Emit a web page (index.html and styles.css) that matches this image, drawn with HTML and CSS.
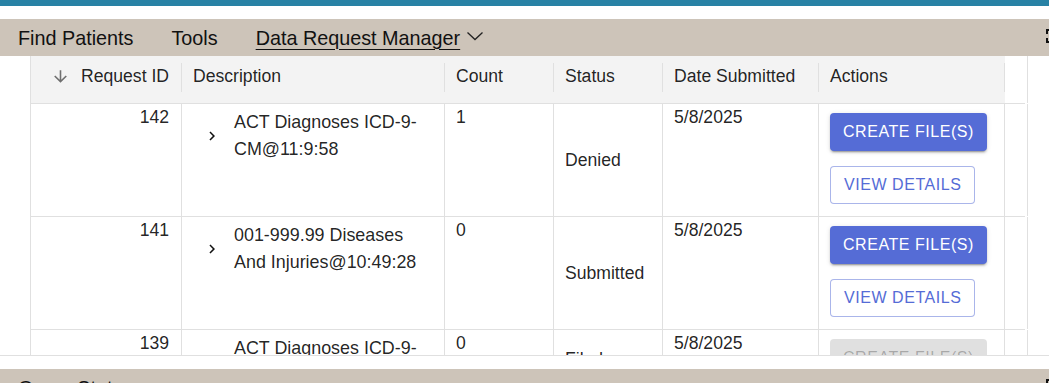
FILE: index.html
```html
<!DOCTYPE html>
<html lang="en">
<head>
<meta charset="utf-8">
<title>Data Request Manager</title>
<link rel="stylesheet" href="styles.css">
</head>
<body>
<div class="topline"></div>
<nav class="bar nav">
  <a class="nav-item">Find Patients</a>
  <a class="nav-item">Tools</a>
  <a class="nav-item active"><span class="nav-label">Data Request Manager</span><svg class="nav-caret" viewBox="0 0 18 10" width="18" height="10"><polyline points="1.5,1.5 9,8.5 16.5,1.5" fill="none" stroke="#222" stroke-width="1.3"/></svg></a>
  <svg class="fs-icon" viewBox="0 0 24 24" width="24" height="24"><path d="M7 14H5v5h5v-2H7zm-2-4h2V7h3V5H5zm12 7h-3v2h5v-5h-2zM14 5v2h3v3h2V5z" fill="#111"/></svg>
</nav>
<section class="panel">
  <div class="table">
    <div class="row head">
      <div class="hcell num"><svg class="sort-icon" viewBox="0 0 24 24" width="19" height="19"><path d="m20 12-1.41-1.41L13 16.17V4h-2v12.17l-5.58-5.59L4 12l8 8 8-8z" fill="#6f6f6f"/></svg><span>Request ID</span></div>
      <div class="hcell">Description</div>
      <div class="hcell">Count</div>
      <div class="hcell">Status</div>
      <div class="hcell">Date Submitted</div>
      <div class="hcell">Actions</div>
      <div class="hcell filler"></div>
    </div>
    <div class="row">
      <div class="cell num">142</div>
      <div class="cell desc"><span class="exp"><svg viewBox="0 0 24 24" width="18" height="18"><path d="M10 6 8.59 7.41 13.17 12l-4.58 4.59L10 18l6-6z" fill="#111"/></svg></span><span class="desc-text">ACT Diagnoses ICD-9-CM@11:9:58</span></div>
      <div class="cell">1</div>
      <div class="cell status">Denied</div>
      <div class="cell">5/8/2025</div>
      <div class="cell actions"><button class="btn btn-primary">Create File(s)</button><button class="btn btn-outline">View Details</button></div>
      <div class="cell filler"></div>
    </div>
    <div class="row">
      <div class="cell num">141</div>
      <div class="cell desc"><span class="exp"><svg viewBox="0 0 24 24" width="18" height="18"><path d="M10 6 8.59 7.41 13.17 12l-4.58 4.59L10 18l6-6z" fill="#111"/></svg></span><span class="desc-text">001-999.99 Diseases And Injuries@10:49:28</span></div>
      <div class="cell">0</div>
      <div class="cell status">Submitted</div>
      <div class="cell">5/8/2025</div>
      <div class="cell actions"><button class="btn btn-primary">Create File(s)</button><button class="btn btn-outline">View Details</button></div>
      <div class="cell filler"></div>
    </div>
    <div class="row">
      <div class="cell num">139</div>
      <div class="cell desc"><span class="exp"><svg viewBox="0 0 24 24" width="18" height="18"><path d="M10 6 8.59 7.41 13.17 12l-4.58 4.59L10 18l6-6z" fill="#111"/></svg></span><span class="desc-text">ACT Diagnoses ICD-9-CM@10:12:31</span></div>
      <div class="cell">0</div>
      <div class="cell status">Filed</div>
      <div class="cell">5/8/2025</div>
      <div class="cell actions"><button class="btn btn-disabled" disabled>Create File(s)</button></div>
      <div class="cell filler"></div>
    </div>
  </div>
</section>
<div class="bar section-bar">
  <span class="nav-item">Query Status</span>
  <svg class="fs-icon" viewBox="0 0 24 24" width="24" height="24"><path d="M7 14H5v5h5v-2H7zm-2-4h2V7h3V5H5zm12 7h-3v2h5v-5h-2zM14 5v2h3v3h2V5z" fill="#111"/></svg>
</div>
</body>
</html>
```
FILE: styles.css
```css
* { box-sizing: border-box; }

html, body {
  margin: 0;
  padding: 0;
}

body {
  width: 1049px;
  height: 383px;
  overflow: hidden;
  background: #ffffff;
  font-family: "Liberation Sans", Arial, sans-serif;
  color: rgba(0, 0, 0, 0.87);
}

.topline {
  height: 6px;
  background: #2882a5;
  margin-bottom: 13px;
}

.bar {
  display: flex;
  align-items: center;
  height: 37px;
  padding-left: 18px;
  background: #cdc4b9;
  overflow: hidden;
  font-size: 19.8px;
  color: #111;
}

.nav {
  gap: 38px;
}

.nav-item {
  white-space: nowrap;
  line-height: 24px;
}

.nav-item.active {
  display: flex;
  align-items: center;
  gap: 6px;
}

.nav-label {
  text-decoration: underline;
  text-decoration-thickness: 1px;
  text-underline-offset: 4px;
}

.nav-caret {
  display: block;
  margin-top: -3px;
}

.fs-icon {
  flex-shrink: 0;
  align-self: flex-start;
  margin-top: 5px;
  margin-left: auto;
  margin-right: -16px;
}

.section-bar {
  margin-top: 13px;
}

.panel {
  height: 300px;
  border-bottom: 1px solid #e0e0e0;
  padding-left: 30px;
  overflow: hidden;
}

.table {
  width: 995px;
  border-left: 1px solid #e0e0e0;
  font-size: 17.6px;
  line-height: 1.5;
}

.row {
  display: grid;
  grid-template-columns: 151px 263px 109px 109px 156px 186px 20px;
  border-bottom: 1px solid #e0e0e0;
}

.head {
  height: 48px;
}

.hcell {
  position: relative;
  background: #f3f3f3;
  padding: 7px 11px 0;
  white-space: nowrap;
}

.hcell::after {
  content: "";
  position: absolute;
  right: 0;
  top: 7px;
  width: 1px;
  height: 29px;
  background: #e0e0e0;
}

.hcell.num {
  display: flex;
  justify-content: flex-end;
  align-items: flex-start;
  align-self: stretch;
  padding: 7px 13px 0 0;
  gap: 11px;
}

.sort-icon {
  display: block;
  margin-top: 4px;
}

.hcell.filler {
  background: #ffffff;
  border-right: 1px solid #e0e0e0;
}

.hcell.filler::after {
  display: none;
}

.cell {
  border-right: 1px solid #e0e0e0;
  padding: 0 11px;
}

.cell.num {
  text-align: right;
  padding-right: 12px;
}

.cell.desc {
  display: flex;
  align-items: center;
  align-self: start;
  padding-top: 5px;
  padding-left: 11px;
  border-right: none;
  box-shadow: inset -1px 0 0 #e0e0e0;
  height: 100%;
}

.exp {
  display: flex;
  justify-content: center;
  align-items: center;
  width: 37px;
  height: 53px;
  flex-shrink: 0;
  margin-right: 4px;
  align-self: flex-start;
}

.exp svg {
  display: block;
}

.desc-text {
  align-self: flex-start;
  font-size: 17.9px;
}

.cell.status {
  display: flex;
  align-items: center;
}

.cell.actions {
  display: flex;
  flex-direction: column;
  align-items: flex-start;
  gap: 15px;
  padding: 9px 11px 12px;
}

.btn {
  display: inline-flex;
  align-items: center;
  height: 38px;
  padding: 0 13px;
  border-radius: 4px;
  font-family: "Liberation Sans", Arial, sans-serif;
  font-size: 16px;
  letter-spacing: 0.55px;
  text-transform: uppercase;
  white-space: nowrap;
  cursor: pointer;
}

.btn-primary {
  background: #556cd6;
  color: #ffffff;
  border: none;
  box-shadow: 0 3px 1px -2px rgba(0, 0, 0, 0.2), 0 2px 2px 0 rgba(0, 0, 0, 0.14), 0 1px 5px 0 rgba(0, 0, 0, 0.12);
}

.btn-outline {
  background: #ffffff;
  color: #556cd6;
  border: 1px solid rgba(85, 108, 214, 0.5);
}

.btn-disabled {
  background: rgba(0, 0, 0, 0.12);
  color: rgba(0, 0, 0, 0.26);
  border: none;
  cursor: default;
}
```
